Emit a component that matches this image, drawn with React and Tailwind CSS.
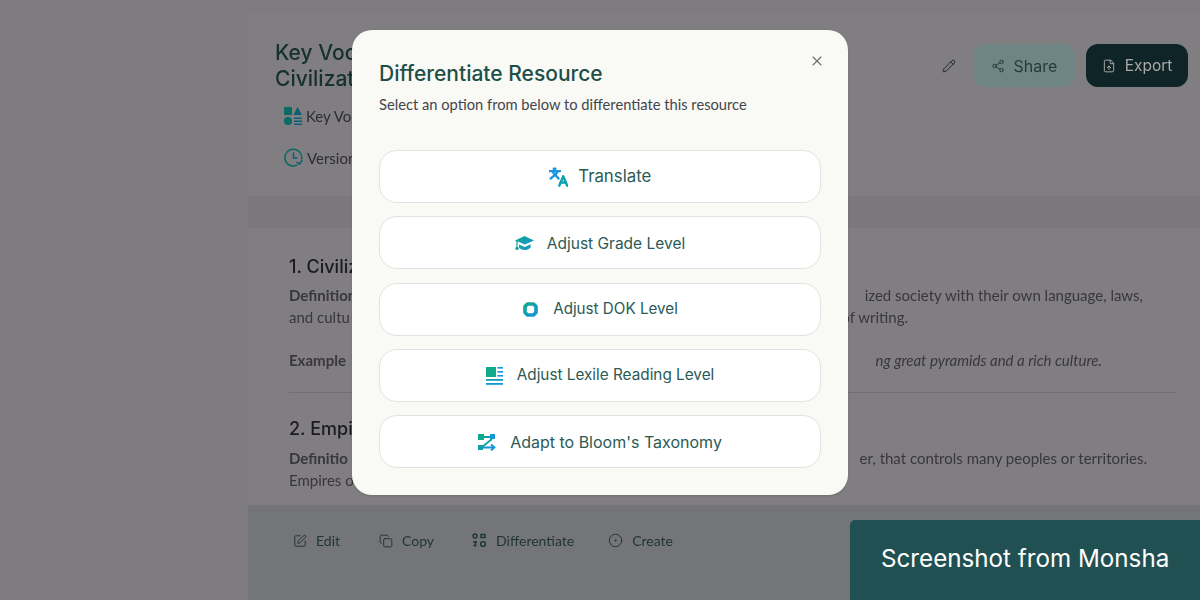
import { Pencil, Share2, FileUp, X, SquarePen, Copy, CircleDot } from 'lucide-react'

const heading = { fontFamily: 'Inter, sans-serif' }

function Grad({ id }) {
  return (
    <defs>
      <linearGradient id={id} x1="0" y1="0" x2="1" y2="1">
        <stop offset="0%" stopColor="#10a88f" />
        <stop offset="100%" stopColor="#1396d6" />
      </linearGradient>
    </defs>
  )
}

function TranslateIcon() {
  return (
    <svg width="19" height="20" viewBox="0 0 24 24" fill="none" strokeWidth="3" strokeLinecap="round" strokeLinejoin="round">
      <g stroke="#1a94e0">
        <path d="m5 6 7 8" />
        <path d="m2 14 7-6 2-3" />
        <path d="M1 4.5h13" />
        <path d="M6 1.5h2" />
      </g>
      <g stroke="#0e9fb0">
        <path d="m23 23-5-12-5 12" />
        <path d="M15 19h6" />
      </g>
    </svg>
  )
}

function CapIcon() {
  return (
    <svg width="19" height="17" viewBox="0 0 19 17">
      <Grad id="capg" />
      <path d="M9.5 1 19 5.4 9.8 9.6 3.6 6.8 2.6 7.2V12H1.4V6.5L0 5.5Z" fill="url(#capg)" />
      <path d="M4 9.4 9.8 12 15.6 9.2V12.4C13.6 14.4 11.6 15 9.6 15 7.4 15 5.6 14.2 4 13Z" fill="url(#capg)" />
      <circle cx="2" cy="13.4" r="1.7" fill="#10a88f" />
    </svg>
  )
}

function DokIcon() {
  return (
    <svg width="17" height="17" viewBox="0 0 17 17" fill="none">
      <Grad id="dokg" />
      <path d="M5.5 3h6L14 5.5v6L11.5 14h-6L3 11.5v-6Z" stroke="url(#dokg)" strokeWidth="3.6" strokeLinejoin="round" />
    </svg>
  )
}

function LexileIcon() {
  return (
    <svg width="17" height="18" viewBox="0 0 17 18">
      <rect x="0" y="0" width="10" height="10" fill="#0fa98c" />
      <rect x="11.5" y="0" width="5.5" height="1.6" fill="#1396d6" />
      <rect x="11.5" y="4" width="5.5" height="1.6" fill="#1396d6" />
      <rect x="11.5" y="8" width="5.5" height="1.6" fill="#1396d6" />
      <rect x="0" y="12" width="17" height="1.8" fill="#12a0b8" />
      <rect x="0" y="16" width="17" height="1.8" fill="#1396d6" />
    </svg>
  )
}

function BloomIcon() {
  return (
    <svg width="18" height="17" viewBox="0 0 18 17" fill="none">
      <rect x="0" y="0" width="6" height="6" fill="#0fa98c" />
      <rect x="12" y="0" width="5" height="5" fill="#1396d6" />
      <path d="M6 3h6M14 5 4 13" stroke="#0fa0a8" strokeWidth="1.8" />
      <rect x="0" y="11" width="5" height="5" fill="#0fa0a8" />
      <path d="M5 13.5h11M13 10.5l3.5 3-3.5 3" stroke="#1396d6" strokeWidth="1.8" />
    </svg>
  )
}

function KeyVocabIcon() {
  return (
    <svg width="18" height="18" viewBox="0 0 18 18">
      <rect x="0" y="0" width="8" height="8" rx="1" fill="#0a6a64" />
      <path d="M13.5 0 18 8H9.5Z" fill="#0d5f78" />
      <circle cx="4" cy="14" r="4" fill="#0a6a64" />
      <path d="M10 10.5h8v1.5h-8zM10 13.5h8V15h-8zM10 16.5h8V18h-8z" fill="#0d5f78" />
    </svg>
  )
}

function VersionIcon() {
  return (
    <svg width="19" height="19" viewBox="0 0 19 19" fill="none" strokeWidth="1.5" strokeLinecap="round">
      <path d="M13 17.2A8.4 8.4 0 1 1 17.6 11" stroke="#0a6a64" />
      <path d="M9.5 5v5H13" stroke="#0d5f78" />
      <path d="M18 12.5 15.5 16 13 14.5" stroke="#0d5f78" />
    </svg>
  )
}

function DifferentiateSmall() {
  return (
    <svg width="15" height="15" viewBox="0 0 15 15" fill="none" stroke="#1e3532" strokeWidth="1.4">
      <circle cx="3" cy="3" r="2" />
      <path d="M9 1.5h4v3H9z" />
      <path d="M1 9h4M3.5 8v5M1.5 12l2 1.5" />
      <circle cx="11" cy="11" r="2.4" />
    </svg>
  )
}

const options = [
  { label: 'Translate', icon: <TranslateIcon />, cls: 'gap-[10.5px] text-[16.8px]' },
  { label: 'Adjust Grade Level', icon: <CapIcon />, cls: 'gap-[13px] text-[15.5px]' },
  { label: 'Adjust DOK Level', icon: <DokIcon />, cls: 'gap-[14px] text-[15.2px]' },
  { label: 'Adjust Lexile Reading Level', icon: <LexileIcon />, cls: 'gap-[14px] text-[15.3px]' },
  { label: "Adapt to Bloom's Taxonomy", icon: <BloomIcon />, cls: 'gap-[14px] text-[16px]' },
]

const tools = [
  { label: 'Edit', icon: <SquarePen size={14} strokeWidth={1.6} />, cls: 'mr-[5px]' },
  { label: 'Copy', icon: <Copy size={14} strokeWidth={1.6} />, cls: 'mr-[4px]' },
  { label: 'Differentiate', icon: <DifferentiateSmall />, cls: '' },
  { label: 'Create', icon: <CircleDot size={15} strokeWidth={1.5} />, cls: '' },
]

function Line({ left, right, pad, className }) {
  return (
    <div className={`flex justify-between text-[15px] leading-[22px] text-[#38373a] ${className || ''}`}>
      <span className="whitespace-nowrap">{left}</span>
      <span className={`whitespace-nowrap ${pad}`}>{right}</span>
    </div>
  )
}

export default function App() {
  return (
    <div className="relative h-[600px] w-[1200px] overflow-hidden bg-[#7e7c7f]" style={{ fontFamily: 'Lato, sans-serif' }}>
      {/* Pagina ao fundo */}
      <div className="flex h-full blur-[0.4px]">
        <div className="w-[248px] shrink-0" />
        <div className="flex min-w-0 flex-1 flex-col">
          <div className="mt-[14px] flex h-[182px] shrink-0 justify-between bg-[#807e81] pl-[27px] pr-[12px] pt-[26px]">
            <div>
              <h1 className="text-[21px] font-medium leading-[26px] text-[#15302d]" style={heading}>
                Key Voc<br />Civilizat
              </h1>
              <div className="ml-[9px] mt-[13px] flex items-center gap-[4px] text-[15px] text-[#2d2d30]">
                <KeyVocabIcon /> Key Voc
              </div>
              <div className="ml-[9px] mt-[19px] flex items-center gap-[4px] text-[15px] text-[#2d2d30]">
                <VersionIcon /> Version
              </div>
            </div>
            <div className="mt-[4px] flex h-[43px] items-center text-[16px]" style={heading}>
              <Pencil size={14} strokeWidth={1.7} className="mr-[17px] text-[#1e2b2a]" />
              <button className="flex h-[43px] w-[102px] items-center justify-center gap-[9px] rounded-[12px] bg-[#6f8584] text-[#263c3a]">
                <Share2 size={14} strokeWidth={1.7} /> Share
              </button>
              <button className="ml-[11px] flex h-[43px] w-[102px] items-center justify-center gap-[9px] rounded-[12px] bg-[#0e2426] text-[15.5px] text-[#a9a9a9]">
                <FileUp size={14} strokeWidth={1.7} /> Export
              </button>
            </div>
          </div>
          <div className="h-[32px] shrink-0 bg-[#7a787b]" />
          <div className="flex-1 bg-[#807e81] pl-[41px] pr-[24px] pt-[27px]">
            <h2 className="text-[18px] font-medium leading-[24px] text-[#1b1b1d]" style={heading}>1. Civiliz</h2>
            <Line className="mt-[5px]" left={<b>Definition</b>} right="ized society with their own language, laws," pad="pr-[33px]" />
            <Line left="and cultu" right="of writing." pad="pr-[268px]" />
            <Line className="mt-[21px]" left={<b>Example</b>} right={<i>ng great pyramids and a rich culture.</i>} pad="pr-[74px]" />
            <div className="mt-[21px] border-t border-[#727073]" />
            <h2 className="mt-[24px] text-[18px] font-medium leading-[24px] text-[#1b1b1d]" style={heading}>2. Empi</h2>
            <Line className="mt-[6px]" left={<b>Definitio</b>} right="er, that controls many peoples or territories." pad="pr-[29px]" />
            <Line left="Empires o" right="" pad="" />
          </div>
          <div className="flex h-[95px] shrink-0 items-start gap-[34px] bg-[#747576] pl-[45px] pt-[25px] text-[14px] text-[#1e3532]">
            {tools.map(t => (
              <div key={t.label} className={`flex items-center gap-[9px] ${t.cls}`}>
                {t.icon}
                <span>{t.label}</span>
              </div>
            ))}
          </div>
        </div>
      </div>

      {/* Modal */}
      <div className="absolute left-[352px] top-[30px] flex h-[465px] w-[496px] flex-col rounded-[20px] bg-[#f9f9f5] px-[27px] pt-[31px] shadow-sm">
        <X size={16} strokeWidth={1.6} className="absolute right-[23px] top-[23px] text-[#6d706e]" />
        <h2 className="text-[21px] font-medium leading-[26px] text-[#1d4f48]" style={heading}>Differentiate Resource</h2>
        <p className="mt-[7px] text-[14.7px] leading-[20px] text-[#45454a]">Select an option from below to differentiate this resource</p>
        <div className="mt-[36px] flex flex-col gap-[13.25px]">
          {options.map(o => (
            <button
              key={o.label}
              className={`flex h-[53px] items-center justify-center rounded-[18px] border border-[#e2e2e2] bg-white pt-[1px] text-[#2a5a55] ${o.cls}`}
              style={heading}
            >
              {o.icon}
              <span>{o.label}</span>
            </button>
          ))}
        </div>
      </div>

      {/* Selo */}
      <div className="absolute bottom-0 right-0 flex h-[80px] w-[350px] items-center rounded-tl-[5px] bg-[#205052] pb-[2px] pl-[31px] text-[24.2px] text-white" style={heading}>
        Screenshot from Monsha
      </div>
    </div>
  )
}
